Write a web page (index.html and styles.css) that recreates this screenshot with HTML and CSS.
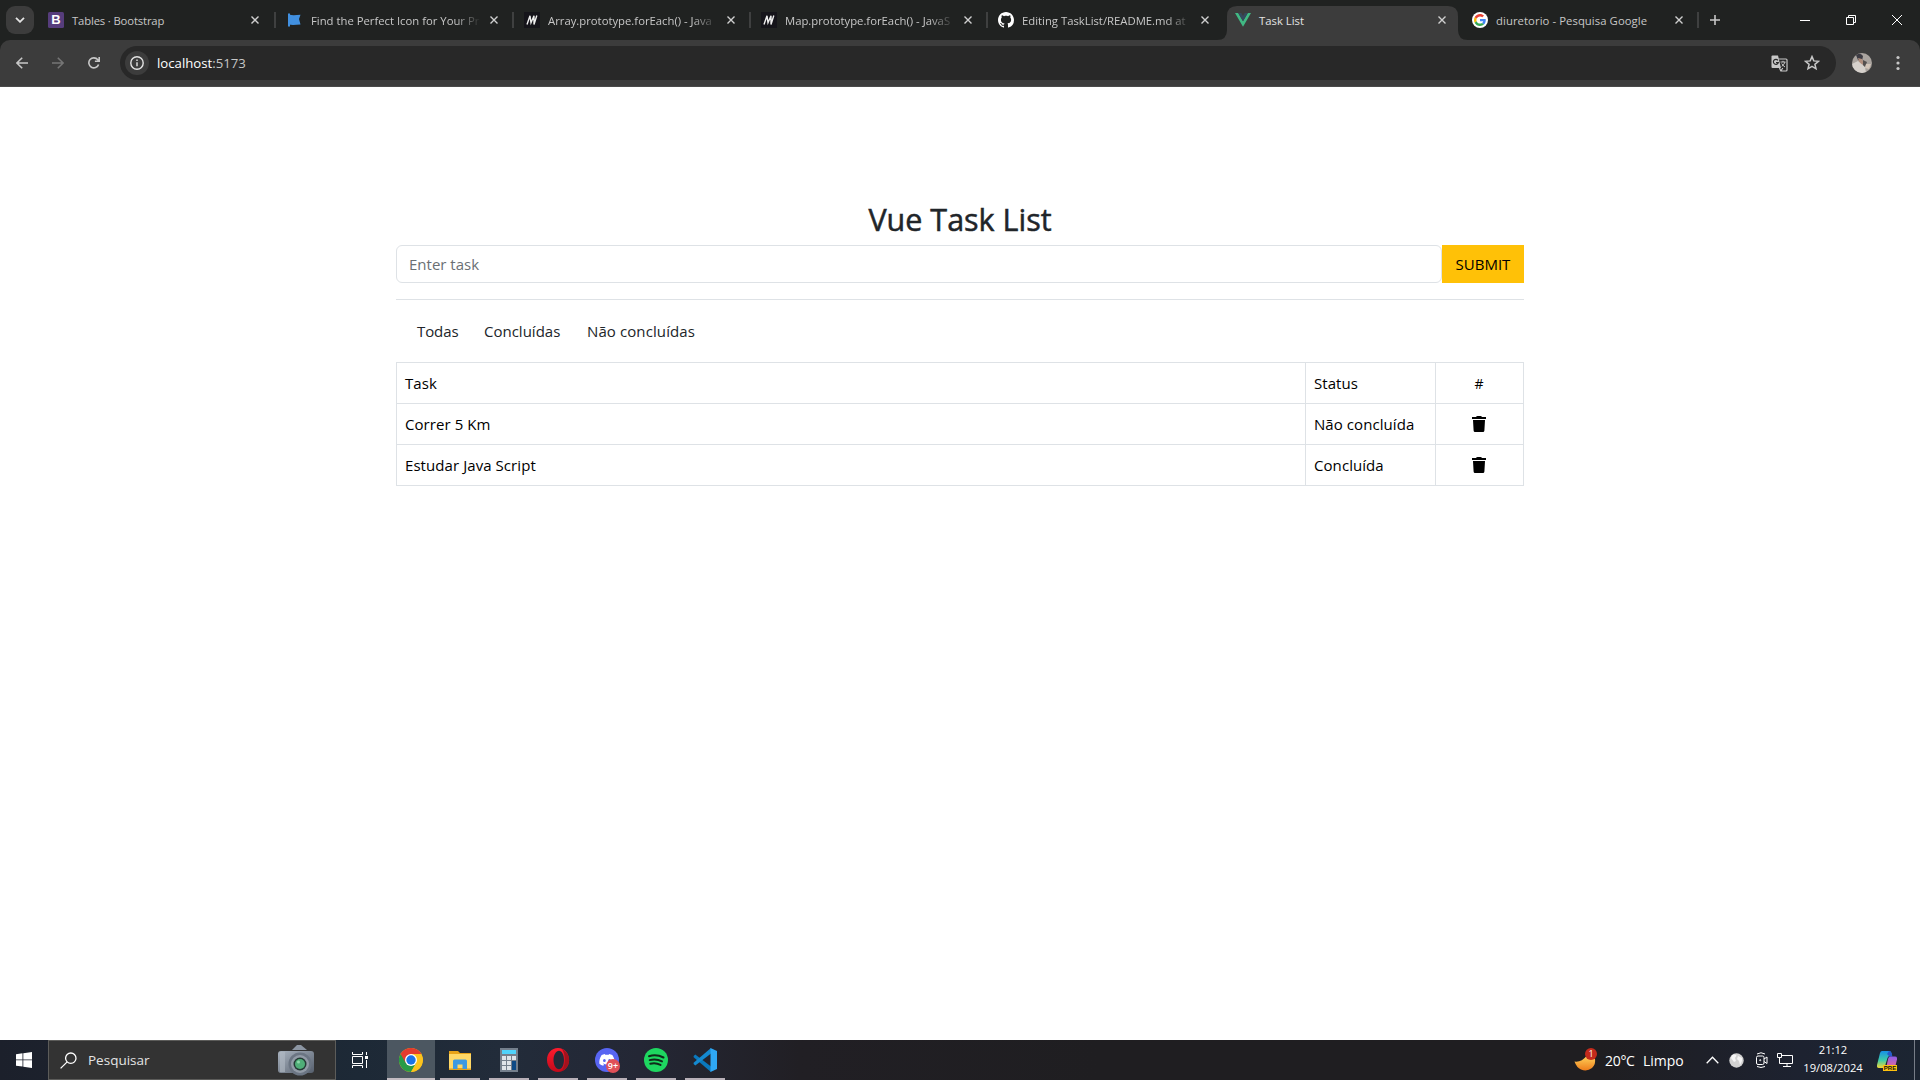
FILE: index.html
```html
<!DOCTYPE html>
<html lang="pt-BR">
<head>
<meta charset="utf-8">
<title>Task List</title>
<link rel="stylesheet" href="styles.css">
</head>
<body>
<header class="browser">
  <div class="tabstrip">
    <button class="tab-search"><svg width="10" height="6" viewBox="0 0 10 6" fill="none" stroke="#e3e3e3" stroke-width="1.8"><path d="M1 .8l4 4 4-4"/></svg></button>
    <div class="tab tab-first">
      <svg class="favicon" viewBox="0 0 16 16"><rect width="16" height="16" rx="1.5" fill="#563d7c"/></svg><b class="boot-b">B</b>
      <span class="tab-title t-boot">Tables · Bootstrap</span><svg class="close" viewBox="0 0 8 8"><path d="M.5 .5l7 7M7.5 .5l-7 7"/></svg>
    </div>
    <div class="tab">
      <svg class="favicon" viewBox="0 0 16 16" fill="#4190e0"><path d="M1 1.5h2v13H1z"/><path d="M2 2.6c3 1.2 7 .7 11.5.2L12 7l1.500 5.500C9 12.800 5 13.400 2 12.500z"/></svg>
      <span class="tab-title fade">Find the Perfect Icon for Your Pr</span><svg class="close" viewBox="0 0 8 8"><path d="M.5 .5l7 7M7.5 .5l-7 7"/></svg>
    </div>
    <div class="tab">
      <svg class="favicon" viewBox="0 0 16 16"><rect width="16" height="16" fill="#15141a"/><path d="M3 12.500L6 3.800 7 10.800 10 3.800V12.500L12.800 3.500" fill="none" stroke="#eee" stroke-width="1.400"/></svg>
      <span class="tab-title fade">Array.prototype.forEach() - Java</span><svg class="close" viewBox="0 0 8 8"><path d="M.5 .5l7 7M7.5 .5l-7 7"/></svg>
    </div>
    <div class="tab">
      <svg class="favicon" viewBox="0 0 16 16"><rect width="16" height="16" fill="#15141a"/><path d="M3 12.500L6 3.800 7 10.800 10 3.800V12.500L12.800 3.500" fill="none" stroke="#eee" stroke-width="1.400"/></svg>
      <span class="tab-title fade">Map.prototype.forEach() - JavaS</span><svg class="close" viewBox="0 0 8 8"><path d="M.5 .5l7 7M7.5 .5l-7 7"/></svg>
    </div>
    <div class="tab no-sep">
      <svg class="favicon" viewBox="0 0 16 16" fill="#fff"><path d="M8 0C3.580 0 0 3.580 0 8c0 3.540 2.290 6.530 5.470 7.590.4.070.55-.17.55-.38 0-.19-.01-.82-.01-1.490-2.010.37-2.530-.49-2.690-.94-.09-.23-.48-.94-.82-1.130-.28-.15-.68-.52-.01-.53.63-.01 1.080.58 1.230.82.72 1.210 1.870.87 2.330.66.070-.52.28-.87.51-1.070-1.780-.2-3.640-.89-3.640-3.950 0-.87.31-1.590.82-2.150-.08-.2-.36-1.020.08-2.120 0 0 .67-.21 2.200.82.64-.18 1.320-.27 2-.27s1.360.09 2 .27c1.530-1.040 2.200-.82 2.200-.82.44 1.100.16 1.920.08 2.120.51.56.82 1.270.82 2.150 0 3.070-1.870 3.750-3.650 3.950.29.25.54.73.54 1.480 0 1.070-.01 1.930-.01 2.200 0 .21.15.46.55.38A8.010 8.010 0 0 0 16 8c0-4.420-3.580-8-8-8z"/></svg>
      <span class="tab-title fade">Editing TaskList/README.md at</span><svg class="close" viewBox="0 0 8 8"><path d="M.5 .5l7 7M7.5 .5l-7 7"/></svg>
    </div>
    <div class="tab active no-sep">
      <svg class="tab-shape" width="251" height="34" viewBox="0 0 251 34"><path d="M0 34Q10 34 10 24V10Q10 0 20 0H231Q241 0 241 10V24Q241 34 251 34z" fill="#3c3c3c"/></svg>
      <svg class="favicon" viewBox="0 0 16 16"><path d="M0 1h3.200L8 9.300 12.800 1H16L8 14.800z" fill="#41b883"/><path d="M3.200 1h3L8 4.100 9.800 1h3L8 9.300z" fill="#34495e"/></svg>
      <span class="tab-title">Task List</span><svg class="close" viewBox="0 0 8 8"><path d="M.5 .5l7 7M7.5 .5l-7 7"/></svg>
    </div>
    <div class="tab">
      <svg class="favicon" viewBox="0 0 16 16"><circle cx="8" cy="8" r="8" fill="#fff"/><g transform="translate(2 2) scale(.25)"><path fill="#EA4335" d="M24 9.500c3.540 0 6.710 1.220 9.210 3.600l6.850-6.850C35.900 2.380 30.470 0 24 0 14.620 0 6.510 5.380 2.560 13.220l7.980 6.190C12.430 13.720 17.740 9.500 24 9.500z"/><path fill="#4285F4" d="M46.980 24.550c0-1.570-.15-3.090-.38-4.550H24v9.020h12.940c-.58 2.960-2.260 5.480-4.780 7.180l7.730 6c4.510-4.180 7.090-10.360 7.090-17.650z"/><path fill="#FBBC05" d="M10.530 28.590c-.48-1.450-.76-2.990-.76-4.590s.27-3.140.76-4.590l-7.980-6.190C.92 16.460 0 20.120 0 24c0 3.880.92 7.540 2.560 10.780l7.970-6.190z"/><path fill="#34A853" d="M24 48c6.480 0 11.930-2.130 15.890-5.810l-7.730-6c-2.150 1.450-4.920 2.300-8.160 2.300-6.260 0-11.570-4.220-13.470-9.910l-7.980 6.190C6.510 42.620 14.620 48 24 48z"/></g></svg>
      <span class="tab-title t-goog">diuretorio - Pesquisa Google</span><svg class="close" viewBox="0 0 8 8"><path d="M.5 .5l7 7M7.5 .5l-7 7"/></svg>
    </div>
    <svg class="new-tab" width="10" height="10" viewBox="0 0 10 10" stroke="#c7c7c7" stroke-width="1.600"><path d="M5 0v10M0 5h10"/></svg>
    <div class="win-controls">
      <svg width="10" height="10" viewBox="0 0 10 10" stroke="#fff"><path d="M0 5.500h10"/></svg>
      <svg width="10" height="10" viewBox="0 0 10 10" stroke="#fff" fill="none"><path d="M.5 2.500h7v7h-7zM2.500 2.500v-2h7v7h-2"/></svg>
      <svg width="10" height="10" viewBox="0 0 10 10" stroke="#fff"><path d="M0 0l10 10M10 0L0 10"/></svg>
    </div>
  </div>
  <div class="toolbar">
    <svg class="nav-icon" width="12" height="12" viewBox="0 0 12 12" fill="none" stroke="#c7c7c7" stroke-width="1.600"><path d="M12 6H1.200M6.200 .7L.9 6l5.300 5.300"/></svg>
    <svg class="nav-icon" width="12" height="12" viewBox="0 0 12 12" fill="none" stroke="#757575" stroke-width="1.600"><path d="M0 6h10.800M5.800 .7L11.100 6l-5.300 5.300"/></svg>
    <svg class="nav-icon" width="12" height="12" viewBox="0 0 12 12" fill="none" stroke="#c7c7c7" stroke-width="1.600"><path d="M10.600 7.400A5 5 0 1 1 9.800 2.800L11 4M11.200 0v4.300H6.900"/></svg>
    <div class="omnibox">
      <span class="site-info"><svg width="14" height="14" viewBox="0 0 14 14" fill="none" stroke="#e3e3e3" stroke-width="1.400"><circle cx="7" cy="7" r="6.200"/><path d="M7 6.200v4M7 3.500V5"/></svg></span>
      <span class="url">localhost<span class="port">:5173</span></span>
      <svg class="translate" width="17" height="17" viewBox="0 0 17 17"><path d="M1.500 .5H7L10 13H1.500Q.5 13 .5 12V1.500Q.5 .5 1.500 .5z" fill="#c7c7c7"/><path d="M7.500 4H15q1 0 1 1v10q0 1-1 1H9.800L8.500 13M9.800 16l2-3" fill="none" stroke="#c7c7c7" stroke-width="1.200"/><path d="M6.900 5.300A2.500 2.500 0 1 0 7.300 7.500H5" fill="none" stroke="#282828" stroke-width="1.200"/><path d="M9.500 7h5M12 5.800V7M14 7q-1 3-3.300 4.400M10.700 8.500q1 2 3.300 3.500" fill="none" stroke="#c7c7c7"/></svg>
      <svg class="star" width="16" height="16" viewBox="0 0 16 16" fill="none" stroke="#c7c7c7" stroke-width="1.500"><path d="M8 1.600l1.800 4.300 4.700.4-3.600 3 1.100 4.500L8 11.400l-4 2.400 1.100-4.500-3.600-3 4.700-.4z"/></svg>
    </div>
    <svg class="avatar" width="20" height="20" viewBox="0 0 20 20"><clipPath id="av"><circle cx="10" cy="10" r="10"/></clipPath><g clip-path="url(#av)"><path d="M0 0h20v20H0z" fill="#aaa49f"/><path d="M4 2q4-3 7 1l-1 5-4-1z" fill="#3c3b43"/><path d="M6 5l4 1 2 5-4 1z" fill="#b08e7d"/><path d="M0 11l6-3 7 6 1 6H0z" fill="#d6d1cc"/><path d="M11 7l4 2-2 5-2-2z" fill="#54504f"/><path d="M14 11l5 0-2 5-4-1z" fill="#d3c5b9"/></g></svg>
    <svg width="4" height="16" viewBox="0 0 4 16" fill="#c7c7c7"><circle cx="2" cy="2.500" r="1.600"/><circle cx="2" cy="8" r="1.600"/><circle cx="2" cy="13.500" r="1.600"/></svg>
  </div>
</header>
<main class="page">
  <div class="container">
    <h2>Vue Task List</h2>
    <form class="entry"><input type="text" placeholder="Enter task"><button type="button">SUBMIT</button></form>
    <hr>
    <nav class="filters"><a class="f-all">Todas</a><a class="f-done">Concluídas</a><a class="f-open">Não concluídas</a></nav>
    <table>
      <tr><td class="c-task">Task</td><td class="c-status">Status</td><td class="c-act c-hash">#</td></tr>
      <tr><td>Correr 5 Km</td><td>Não concluída</td><td class="c-act"><svg width="14" height="16" viewBox="0 0 14 16"><path d="M0 1h4q.5-1 1.500-1h3q1 0 1.500 1h4v2H0zM1 4h12l-.6 10.500q-.1 1.500-1.400 1.500H3q-1.300 0-1.400-1.500z"/></svg></td></tr>
      <tr><td>Estudar Java Script</td><td>Concluída</td><td class="c-act"><svg width="14" height="16" viewBox="0 0 14 16"><path d="M0 1h4q.5-1 1.500-1h3q1 0 1.500 1h4v2H0zM1 4h12l-.6 10.500q-.1 1.500-1.400 1.500H3q-1.300 0-1.400-1.500z"/></svg></td></tr>
    </table>
  </div>
</main>
<footer class="taskbar">
  <div class="start"><svg width="16" height="16" viewBox="0 0 16 16" fill="#fff"><path d="M0 2.200l6.500-.9v6.200H0zM7.300 1.200L16 0v7.500H7.300zM0 8.300h6.500v6.300L0 13.700zM7.300 8.300H16V16l-8.700-1.200z"/></svg></div>
  <div class="search">
    <svg width="17" height="17" viewBox="0 0 17 17" fill="none" stroke="#fff" stroke-width="1.300"><circle cx="10.800" cy="6.200" r="5.200"/><path d="M7.200 9.900L.6 16.400"/></svg>
    <span>Pesquisar</span>
    <svg class="camera" width="36" height="32" viewBox="0 0 36 32"><defs><linearGradient id="cam" x2="1" y2="1"><stop stop-color="#a9b3bf"/><stop offset="1" stop-color="#565f6d"/></linearGradient></defs><path d="M14 6l5-5h4l6 5z" fill="#8c96a3"/><path d="M3 7h30q3 0 3 3v16q0 3-3 3H3q-3 0-3-3V10q0-3 3-3z" fill="url(#cam)"/><path d="M2 8h5v20H2z" fill="#b2bac4" opacity=".6"/><circle cx="22" cy="20" r="11.500" fill="#6b7583"/><circle cx="22" cy="20" r="9" fill="#929ba7"/><circle cx="22" cy="20" r="6.500" fill="#243b35"/><circle cx="22" cy="20" r="5" fill="#4fae78"/><circle cx="20.500" cy="18" r="1.500" fill="#8ed8a9"/></svg>
  </div>
  <div class="taskview"><svg width="16" height="16" viewBox="0 0 16 16" fill="none" stroke="#fff"><path d="M.5 0v2.500h10V0M.5 4.500h10v7H.5zM.5 16v-2.500h10V16M14.500 0v3M14.500 8v8"/><path d="M13 4h3v3h-3z" fill="#fff" stroke="none"/></svg></div>
  <div class="apps">
    <div class="app current"><svg width="24" height="24" viewBox="0 0 24 24"><circle cx="12" cy="12" r="12" fill="#fbc116"/><path d="M12 12L1.600 6A12 12 0 0 0 12 24L17.200 15z" fill="#289b48"/><path d="M1.600 6A12 12 0 0 1 22.400 6H12L6.800 15z" fill="#e33b2e"/><path d="M22.400 6.500H12v5.500l5.200 3L12 24A12 12 0 0 0 22.400 6.500z" fill="#fcc31e"/><circle cx="12" cy="12" r="6" fill="#fff"/><circle cx="12" cy="12" r="4.700" fill="#1a73e8"/></svg></div>
    <div class="app"><svg width="24" height="24" viewBox="0 0 24 24"><path d="M1 3h9l2 2h11v17H1z" fill="#e8a317"/><path d="M1 6h22v14H1z" fill="#ffd866"/><path d="M5 13q0-1.500 1.500-1.500h11Q19 11.500 19 13v8h-4.500v-4.500h-5V21H5z" fill="#3d99df"/><path d="M1 20h4v1H1zM19 20h4v1h-4z" fill="#e8bb4d"/></svg></div>
    <div class="app"><svg width="24" height="24" viewBox="0 0 24 24"><path d="M3 0h18v24H3z" fill="#747f8c"/><path d="M5 2h14v4H5z" fill="#50d3fb"/><path d="M5 8h4v4H5zM10 8h4v4h-4zM15 8h4v4h-4zM5 13h4v4H5zM10 13h4v4h-4zM5 18h4v4H5zM10 18h4v4h-4z" fill="#dfe4e9"/><path d="M15 13h4v9h-4z" fill="#0e4a86"/></svg></div>
    <div class="app"><svg width="24" height="24" viewBox="0 0 24 24"><defs><linearGradient id="op" x2="0" y2="1"><stop stop-color="#ff1b2d"/><stop offset="1" stop-color="#c20a1b"/></linearGradient></defs><path d="M12 0C5.500 0 1 5.300 1 12s4.500 12 11 12 11-5.300 11-12S18.500 0 12 0zm1 2.800c2.900 0 5 4.100 5 9.200s-2.100 9.200-5 9.200S7.500 17.100 7.500 12 10.100 2.800 13 2.800z" fill="url(#op)" fill-rule="evenodd"/><path d="M15 .6A12 12 0 0 1 15 23.400C20 20 20 4 15 .6z" fill="#a3121d"/></svg></div>
    <div class="app"><svg width="24" height="24" viewBox="0 0 24 24"><circle cx="12" cy="12" r="12" fill="#5865f2"/><path transform="translate(4.300 4.200) scale(.64)" fill="#fff" d="M20.317 4.370a19.800 19.800 0 0 0-4.885-1.515l-.687 1.286a18.300 18.300 0 0 0-5.487 0l-.696-1.286A19.700 19.700 0 0 0 3.677 4.370C.533 9.046-.319 13.580.099 18.058a19.900 19.900 0 0 0 6.024 3.085l1.310-2.022-1.914-.998.364-.429a14.300 14.300 0 0 0 12.217 0l.366.429-1.914.998 1.310 2.022a19.800 19.800 0 0 0 6.037-3.085c.5-5.177-.838-9.674-3.582-13.688zM8.020 15.331a2.160 2.420 0 1 1 .001-4.838 2.160 2.420 0 0 1-.001 4.838zm7.975 0a2.160 2.420 0 1 1 .001-4.838 2.160 2.420 0 0 1-.001 4.838z"/></svg><span class="badge">9+</span></div>
    <div class="app"><svg width="24" height="24" viewBox="0 0 24 24"><circle cx="12" cy="12" r="12" fill="#1ed760"/><path d="M5 8.200q7.500-2.200 14.500 1.300M5.700 12.100q6.500-1.800 12.300 1.300M6.300 15.700q5.500-1.400 10.200 1.200" fill="none" stroke="#10291a" stroke-width="2" stroke-linecap="round"/></svg></div>
    <div class="app"><svg width="24" height="24" viewBox="0 0 24 24"><path d="M.6 8l1.700-1.400 15.700 12V24L.6 9.200z" fill="#0a78bd"/><path d="M.6 16l1.700 1.400L18 5.400V0L.6 14.800z" fill="#1489d0"/><path d="M17.500 0L24 3v18l-6.500 3z" fill="#2fa8f4"/></svg></div>
  </div>
  <div class="weather"><svg width="24" height="24" viewBox="0 0 24 24"><defs><linearGradient id="mn" x2="0" y2="1"><stop stop-color="#ffd25a"/><stop offset="1" stop-color="#ee7d1b"/></linearGradient></defs><path d="M.5 13.500q7 1 12-5.500L21 11q1 5-3 9-5 4-11 1.500Q2.500 19.500 .5 13.500z" fill="url(#mn)"/><circle cx="17" cy="6" r="6" fill="#c42b1c"/></svg><span class="alert-n">1</span><span class="temp">20°C</span><span class="cond">Limpo</span></div>
  <div class="tray">
    <svg width="13" height="8" viewBox="0 0 13 8" fill="none" stroke="#fff" stroke-width="1.300"><path d="M.7 7.200l5.800-6 5.800 6"/></svg>
    <svg class="globe" width="15" height="15" viewBox="0 0 15 15"><circle cx="7.500" cy="7.500" r="7.200" fill="#d2d2d2"/><path d="M3 2q3-1 4.500.5L6 5l1 3-2 1-3-4zM9 3l4 2v3l-2 4-1-4-2-2z" fill="#f5f5f5"/></svg>
    <svg class="meet" width="12" height="16" viewBox="0 0 12 16" fill="none" stroke="#fff"><rect x=".5" y="4" width="7.500" height="8.500" rx="1.500"/><path d="M8 7l3-2v6.500L8 9.500M1 2q4-2.500 8 0M1 14.500q4 2 8 0"/><circle cx="4.200" cy="8.200" r=".6"/></svg>
    <svg class="network" width="16" height="14" viewBox="0 0 16 14" fill="none" stroke="#fff"><path d="M4.500 2.500h11v8H2.500M10 10.500v3M6 13.500h8M.5 .5h4v4h-4zM2.500 4.500v6"/></svg>
  </div>
  <div class="clock"><span class="time">21:12</span><span class="date">19/08/2024</span></div>
  <div class="copilot"><svg width="20" height="20" viewBox="0 0 20 20"><defs><linearGradient id="c1" x2="0" y2="1"><stop stop-color="#168fe8"/><stop offset=".55" stop-color="#3fcda7"/><stop offset="1" stop-color="#f6d834"/></linearGradient><linearGradient id="c2" x2="0" y2="1"><stop stop-color="#8c5ee8"/><stop offset="1" stop-color="#f2698c"/></linearGradient></defs><path d="M5 0h7q2 0 2.500 2l.5 3h-2q-2 0-2.500 2L8 15q-.6 2-2.500 2H2q-2.500 0-2-3L3 2q.6-2 2-2z" fill="url(#c1)"/><path d="M12 0q2 0 2.500 2l1 3.500h-3L10 3z" fill="#2759cb"/><path d="M13 5.500h5q2.500 0 2 3l-2 8q-.5 1.500-2 1.500H9l2-10q.5-2.500 2-2.500z" fill="url(#c2)"/></svg><span class="pre">PRE</span></div>
  <div class="show-desktop"></div>
</footer>
</body>
</html>
```
FILE: styles.css
```css
* { box-sizing: border-box; }
body { margin: 0; width: 1920px; height: 1080px; display: flex; flex-direction: column; overflow: hidden; background: #fff; font-family: "Open Sans", "Noto Sans", sans-serif; }
svg { display: block; flex: none; }
button { border: 0; padding: 0; font-family: inherit; }

/* Browser chrome */
.browser { height: 87px; flex: none; background: #202221; }
.tabstrip { height: 40px; display: flex; align-items: center; }
.tab-search { width: 28px; height: 28px; margin: 0 4px 0 6px; border-radius: 9px; background: #3c3c3c; display: flex; align-items: center; justify-content: center; }
.tab { position: relative; width: 237px; height: 40px; flex: none; display: flex; align-items: center; padding-left: 11px; }
.tab-first { width: 238px; padding-left: 10px; }
.tab::after { content: ""; position: absolute; right: -1px; top: 12px; width: 2px; height: 16px; background: #3f4040; }
.tab-first::after { right: 0; }
.tab.no-sep::after { display: none; }
.favicon { width: 16px; height: 16px; position: relative; }
.boot-b { position: absolute; left: 10px; top: 12px; width: 16px; font: bold 13px/16px "Liberation Sans", sans-serif; text-align: center; color: #fff; }
.tab-title { width: 170px; margin: 1px 9px 0 8px; font-size: 11.300px; line-height: 18px; color: #c7c7c7; white-space: nowrap; position: relative; }
.t-boot { letter-spacing: -.15px; }
.t-goog { letter-spacing: .07px; }
.fade { -webkit-mask-image: linear-gradient(90deg, #000 144px, transparent 170px); mask-image: linear-gradient(90deg, #000 144px, transparent 170px); }
.close { width: 8px; height: 8px; stroke: #d0d0d0; stroke-width: 1.400; position: relative; }
.tab-shape { position: absolute; left: -7px; top: 6px; }
.active .tab-title { color: #e3e3e3; }
.new-tab { margin-left: 12px; }
.win-controls { display: flex; gap: 36px; margin-left: auto; margin-right: 18px; }
.toolbar { height: 47px; background: #3c3c3c; border-radius: 10px 10px 0 0; border-bottom: 1px solid #4a4a4a; display: flex; align-items: center; padding-left: 16px; }
.nav-icon { margin-right: 24px; }
.nav-icon + .nav-icon + .nav-icon { margin-right: 20px; }
.omnibox { width: 1716px; height: 34px; border-radius: 17px; background: #282828; display: flex; align-items: center; padding-left: 5px; }
.site-info { width: 24px; height: 24px; border-radius: 12px; background: #3c3c3c; display: flex; align-items: center; justify-content: center; }
.url { margin-left: 8px; font-size: 13.200px; color: #fff; }
.port { color: #c7c7c7; }
.translate { margin-left: auto; margin-right: 16px; }
.star { margin-right: 16px; }
.avatar { margin: 0 24px 0 16px; }

/* Task list page */
.page { flex: 1; padding-top: 113px; }
.container { width: 1128px; margin: 0 auto; font-size: 15px; color: #212529; }
h2 { margin: 0 0 7px; font-size: 30.500px; line-height: 38px; font-weight: 500; text-align: center; -webkit-text-stroke: .5px #212529; }
.entry { display: flex; height: 38px; }
.entry input { flex: 1; border: 1px solid #dee2e6; border-radius: 6px; padding: 0 12px; font: inherit; background: #fff; }
.entry input::placeholder { color: #6a6f74; }
.entry button { width: 82px; background: #ffc107; color: #000; font-size: 15px; }
hr { margin: 16px 0; border: 0; border-top: 1px solid #dee2e6; }
.filters { height: 46px; display: flex; align-items: center; gap: 26px; padding: 0 0 16px 21px; white-space: nowrap; }
.f-all { width: 41px; letter-spacing: -.1px; }
.f-done { width: 77px; }
.f-open { letter-spacing: .1px; }
table { width: 1128px; border-collapse: collapse; table-layout: fixed; color: #000; letter-spacing: .07px; }
td { height: 41px; padding: 0 8px; border: 1px solid #dee2e6; }
.c-task { width: 909px; }
.c-status { width: 130px; }
.c-act { text-align: center; padding-right: 9px; }
.c-hash { font-size: 14px; }
.c-act svg { margin: 0 auto; }

/* Windows taskbar */
.taskbar { height: 40px; flex: none; display: flex; background: linear-gradient(90deg, #1c202b 0, #1d2936 360px, #222c3a 500px, #242735 640px, #211f24 800px, #1f1e21 1100px, #1f1e21 1600px, #1d2230 1800px, #1c2532 1920px); color: #fff; }
.start { width: 48px; display: flex; align-items: center; justify-content: center; }
.search { width: 288px; background: #333; border: 1px solid #5c5c5a; display: flex; align-items: center; padding-left: 11px; font-size: 13.500px; color: #e4e4e4; }
.search span { margin-left: 11px; width: 62px; }
.camera { margin-left: auto; margin-right: 21px; }
.taskview { width: 50px; display: flex; align-items: center; justify-content: center; padding-right: 2px; }
.apps { display: flex; gap: 1px; margin-left: 1px; }
.app { position: relative; width: 48px; display: flex; align-items: center; justify-content: center; }
.app::after { content: ""; position: absolute; left: 4px; right: 4px; bottom: 0; height: 2px; background: #b8b0b8; }
.current { background: #4c5761; }
.current::after { left: 0; right: 0; background: #c3bcc2; }
.badge { position: absolute; left: 23px; top: 19px; width: 14px; height: 14px; border-radius: 7px; background: #e05058; font-size: 9px; font-weight: 600; line-height: 14px; text-align: center; }
.weather { position: relative; margin-left: auto; display: flex; align-items: center; font-size: 14px; width: 132px; }
.alert-n { position: absolute; left: 11px; top: 8px; width: 12px; font-size: 9px; line-height: 12px; text-align: center; }
.temp { margin-left: 7px; width: 38px; letter-spacing: -.3px; }
.tray { display: flex; align-items: center; width: 98px; }
.globe { margin-left: 10px; }
.meet { margin-left: 12px; }
.network { margin-left: 9px; }
.clock { width: 58px; display: flex; flex-direction: column; align-items: center; font-size: 11.200px; line-height: 18px; padding-top: 1px; white-space: nowrap; }
.copilot { position: relative; width: 52px; padding: 11px 0 0 15px; }
.pre { position: absolute; left: 21px; top: 25px; width: 14px; height: 6px; background: #ffc20e; color: #111; font: bold 6px/6px "Liberation Sans", sans-serif; text-align: center; }
.show-desktop { width: 6px; border-left: 1px solid #777d87; }
```
